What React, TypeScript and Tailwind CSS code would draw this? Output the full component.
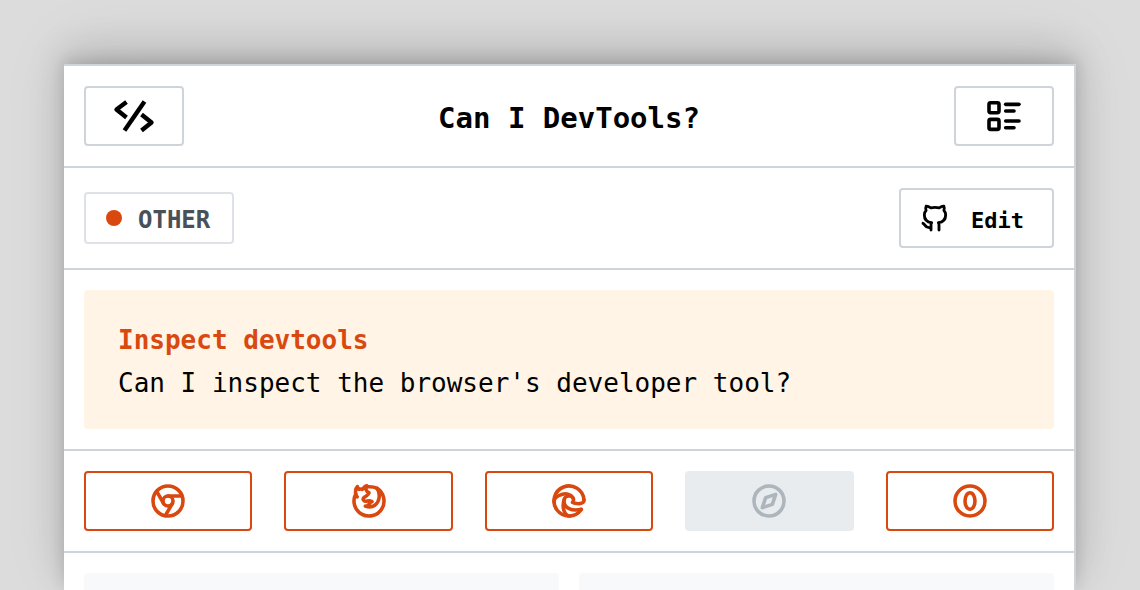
import type { ReactNode } from "react";
import {
  TbBrandChrome,
  TbBrandEdge,
  TbBrandFirefox,
  TbBrandGithub,
  TbBrandSafari,
  TbListDetails,
} from "react-icons/tb";

function CodeIcon() {
  return (
    <svg width="42" height="34" viewBox="0 0 42 34" fill="none" stroke="currentColor" strokeWidth="4.4" aria-hidden="true">
      <path d="M13.5 3 L3.5 10.5 L13.5 18.5" strokeLinejoin="round" />
      <path d="M31.5 2.5 L11.5 31.5" />
      <path d="M28.5 15.5 L38.5 23.5 L28.5 31.5" strokeLinejoin="round" />
    </svg>
  );
}

function OperaIcon() {
  return (
    <svg width="40" height="40" viewBox="0 0 24 24" fill="none" stroke="currentColor" strokeWidth="2.15" aria-hidden="true">
      <circle cx="12" cy="12" r="9" />
      <ellipse cx="12" cy="12" rx="3" ry="5" />
    </svg>
  );
}

const browsers: { name: string; supported: boolean; icon: ReactNode }[] = [
  { name: "Chrome", supported: true, icon: <TbBrandChrome size={40} strokeWidth={2.15} /> },
  { name: "Firefox", supported: true, icon: <TbBrandFirefox size={40} strokeWidth={2.15} /> },
  { name: "Edge", supported: true, icon: <TbBrandEdge size={40} strokeWidth={2.15} /> },
  { name: "Safari", supported: false, icon: <TbBrandSafari size={40} strokeWidth={2.15} /> },
  { name: "Opera", supported: true, icon: <OperaIcon /> },
];

export default function App() {
  return (
    <div className="flex min-h-screen flex-col overflow-hidden bg-[#dcdcdc] px-16 pt-16 font-['DejaVu_Sans_Mono',monospace] text-black">
      <main className="flex flex-1 flex-col border-t-2 border-r-2 border-[#ced4da] bg-white shadow-[0_-4px_14px_rgba(0,0,0,0.13),0_-12px_36px_rgba(0,0,0,0.14),0_-16px_64px_rgba(0,0,0,0.08)]">
        <header className="flex items-center justify-between border-b-2 border-[#ced4da] p-5">
          <a href="#home" aria-label="Home" className="flex h-15 w-25 items-center justify-center rounded border-2 border-[#ced4da]">
            <CodeIcon />
          </a>
          <h1 className="pt-1 text-[29px] leading-10 font-bold">Can I DevTools?</h1>
          <a href="#features" aria-label="All features" className="flex h-15 w-25 items-center justify-center rounded border-2 border-[#ced4da]">
            <TbListDetails size={40} strokeWidth={2.15} />
          </a>
        </header>

        <section className="flex items-center justify-between border-b-2 border-[#ced4da] p-5">
          <div className="flex h-13 items-center gap-4 rounded border-2 border-[#dee2e6] pr-[22px] pl-5">
            <span className="size-4 rounded-full bg-[#d9480f]" />
            <span className="pt-1 text-2xl font-bold text-[#495057]">OTHER</span>
          </div>
          <a href="#edit" className="flex h-15 items-center gap-5 rounded border-2 border-[#ced4da] pr-7 pl-[18px]">
            <TbBrandGithub size={32} strokeWidth={2.15} />
            <span className="pt-1 text-[22px] font-bold">Edit</span>
          </a>
        </section>

        <section className="border-b-2 border-[#ced4da] p-5">
          <div className="rounded bg-[#fff4e6] px-[34px] pt-[29px] pb-6">
            <h2 className="text-[26px] leading-[42px] font-bold text-[#d9480f]">Inspect devtools</h2>
            <p className="text-[26px] leading-[44px]">Can I inspect the browser's developer tool?</p>
          </div>
        </section>

        <section className="grid grid-cols-5 gap-8 border-b-2 border-[#ced4da] p-5">
          {browsers.map((b) => (
            <button
              key={b.name}
              type="button"
              aria-label={b.name}
              disabled={!b.supported}
              className={
                b.supported
                  ? "flex h-15 items-center justify-center rounded border-2 border-[#d9480f] text-[#d9480f]"
                  : "flex h-15 items-center justify-center rounded bg-[#e9ecef] text-[#adb5bd]"
              }
            >
              {b.icon}
            </button>
          ))}
        </section>

        <section className="grid flex-1 grid-cols-2 gap-5 px-5 pt-5">
          <div className="rounded-t bg-[#f8f9fa]" />
          <div className="rounded-t bg-[#f8f9fa]" />
        </section>
      </main>
    </div>
  );
}
